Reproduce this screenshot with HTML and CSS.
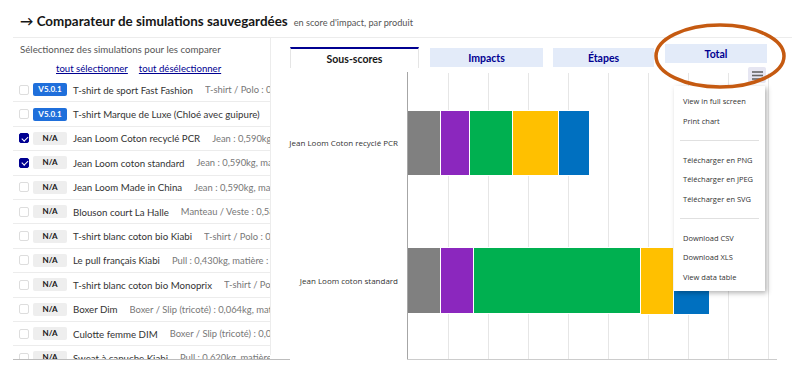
FILE: index.html
```html
<!DOCTYPE html>
<html lang="fr">
<head>
    <meta charset="UTF-8">
    <meta name="viewport" content="width=device-width, initial-scale=1.0">
    <title>Comparateur de simulations</title>
    <link rel="stylesheet" href="styles.css">
</head>
<body>

<div class="page">
    <div class="header">
        <h2 class="title"><span class="arrow">→</span> Comparateur de simulations sauvegardées</h2>
        <span class="subtitle">en score d'impact, par produit</span>
    </div>

    <div class="main">
        <div class="sims">
            <div class="sims-inner">
                <p class="intro">Sélectionnez des simulations pour les comparer</p>
                <div class="links">
                    <a href="#">tout sélectionner</a>
                    <a href="#">tout désélectionner</a>
                </div>
                <ul class="list">
                    <li class="row">
                        <span class="check"></span>
                        <span class="badge version">V5.0.1</span>
                        <span class="name">T-shirt de sport Fast Fashion</span>
                        <span class="detail">T-shirt / Polo : 0,17kg, matière : Polyester</span>
                    </li>
                    <li class="row">
                        <span class="check"></span>
                        <span class="badge version">V5.0.1</span>
                        <span class="name">T-shirt Marque de Luxe (Chloé avec guipure)</span>
                        <span class="detail">T-shirt / Polo : 0,2kg, matière : Coton</span>
                    </li>
                    <li class="row">
                        <span class="check checked"></span>
                        <span class="badge">N/A</span>
                        <span class="name">Jean Loom Coton recyclé PCR</span>
                        <span class="detail">Jean : 0,590kg, ma</span>
                    </li>
                    <li class="row">
                        <span class="check checked"></span>
                        <span class="badge">N/A</span>
                        <span class="name">Jean Loom coton standard</span>
                        <span class="detail">Jean : 0,590kg, matière : Coton</span>
                    </li>
                    <li class="row">
                        <span class="check"></span>
                        <span class="badge">N/A</span>
                        <span class="name">Jean Loom Made in China</span>
                        <span class="detail">Jean : 0,590kg, matière : Coton</span>
                    </li>
                    <li class="row">
                        <span class="check"></span>
                        <span class="badge">N/A</span>
                        <span class="name">Blouson court La Halle</span>
                        <span class="detail">Manteau / Veste : 0,58kg, matière : Polyester</span>
                    </li>
                    <li class="row">
                        <span class="check"></span>
                        <span class="badge">N/A</span>
                        <span class="name">T-shirt blanc coton bio Kiabi</span>
                        <span class="detail">T-shirt / Polo : 0,15kg, matière : Coton bio</span>
                    </li>
                    <li class="row">
                        <span class="check"></span>
                        <span class="badge">N/A</span>
                        <span class="name">Le pull français Kiabi</span>
                        <span class="detail">Pull : 0,430kg, matière : Laine</span>
                    </li>
                    <li class="row">
                        <span class="check"></span>
                        <span class="badge">N/A</span>
                        <span class="name">T-shirt blanc coton bio Monoprix</span>
                        <span class="detail">T-shirt / Polo</span>
                    </li>
                    <li class="row">
                        <span class="check"></span>
                        <span class="badge">N/A</span>
                        <span class="name">Boxer Dim</span>
                        <span class="detail">Boxer / Slip (tricoté) : 0,064kg, matière : Coton</span>
                    </li>
                    <li class="row">
                        <span class="check"></span>
                        <span class="badge">N/A</span>
                        <span class="name">Culotte femme DIM</span>
                        <span class="detail">Boxer / Slip (tricoté) : 0,030kg, matière : Coton</span>
                    </li>
                    <li class="row">
                        <span class="check"></span>
                        <span class="badge">N/A</span>
                        <span class="name">Sweat à capuche Kiabi</span>
                        <span class="detail">Pull : 0,620kg, matière : Coton</span>
                    </li>
                </ul>
            </div>
        </div>

        <div class="chart-panel">
            <div class="tabs">
                <button class="tab active">Sous-scores</button>
                <button class="tab tab-impacts">Impacts</button>
                <button class="tab tab-etapes">Étapes</button>
                <button class="tab tab-total">Total</button>
            </div>

            <div class="chart">
                <svg class="chart-svg" width="522" height="302" viewBox="270 68 522 302">
                    <g stroke="#e6e6e6" stroke-width="1">
                        <line x1="448.5" y1="73" x2="448.5" y2="359"/>
                        <line x1="488.5" y1="73" x2="488.5" y2="359"/>
                        <line x1="528.5" y1="73" x2="528.5" y2="359"/>
                        <line x1="568.5" y1="73" x2="568.5" y2="359"/>
                        <line x1="608.5" y1="73" x2="608.5" y2="359"/>
                        <line x1="648.5" y1="73" x2="648.5" y2="359"/>
                        <line x1="688.5" y1="73" x2="688.5" y2="359"/>
                        <line x1="728.5" y1="73" x2="728.5" y2="359"/>
                        <line x1="768.5" y1="73" x2="768.5" y2="359"/>
                    </g>

                    <!-- Jean Loom Coton recyclé PCR -->
                    <g stroke="#ffffff" stroke-width="1">
                        <rect x="407.5" y="110.5" width="33" height="65" fill="#808080"/>
                        <rect x="440.5" y="110.5" width="29" height="65" fill="#8b27be"/>
                        <rect x="469.5" y="110.5" width="43" height="65" fill="#00b050"/>
                        <rect x="512.5" y="110.5" width="46" height="65" fill="#ffc000"/>
                        <rect x="558.5" y="110.5" width="31" height="65" fill="#0070c0"/>
                    </g>

                    <!-- Jean Loom coton standard -->
                    <g stroke="#ffffff" stroke-width="1">
                        <rect x="407.5" y="247.5" width="33" height="66" fill="#808080"/>
                        <rect x="440.5" y="247.5" width="33" height="66" fill="#8b27be"/>
                        <rect x="473.5" y="247.5" width="167" height="66" fill="#00b050"/>
                        <rect x="640.5" y="247.5" width="33" height="67" fill="#ffc000"/>
                        <rect x="673.5" y="247.5" width="36" height="67" fill="#0070c0"/>
                    </g>

                    <line x1="407.5" y1="72" x2="407.5" y2="360" stroke="#a6a6a6" stroke-width="1"/>
                    <line x1="407" y1="359.5" x2="777" y2="359.5" stroke="#cccccc" stroke-width="1"/>

                    <text class="cat" x="398" y="146" text-anchor="end">Jean Loom Coton recyclé PCR</text>
                    <text class="cat" x="398" y="284" text-anchor="end">Jean Loom coton standard</text>
                </svg>

                <button class="menu-btn" aria-label="Menu du graphique">
                    <svg width="11" height="9" viewBox="0 0 11 9">
                        <g stroke="#666666" stroke-width="1.6">
                            <line x1="0" y1="1" x2="11" y2="1"/>
                            <line x1="0" y1="4.5" x2="11" y2="4.5"/>
                            <line x1="0" y1="8" x2="11" y2="8"/>
                        </g>
                    </svg>
                </button>

                <ul class="menu">
                    <li>View in full screen</li>
                    <li>Print chart</li>
                    <li class="sep"></li>
                    <li>Télécharger en PNG</li>
                    <li>Télécharger en JPEG</li>
                    <li>Télécharger en SVG</li>
                    <li class="sep"></li>
                    <li>Download CSV</li>
                    <li>Download XLS</li>
                    <li>View data table</li>
                </ul>
            </div>
        </div>
    </div>

    <svg class="annotation" width="140" height="72" viewBox="0 0 140 72">
        <ellipse cx="70" cy="36" rx="64" ry="31" fill="none" stroke="#c55a11" stroke-width="3.5"/>
    </svg>
</div>

</body>
</html>
```

FILE: styles.css
```css
body {
    margin: 0;
    font-family: Lato, "Noto Sans", sans-serif;
    color: #161616;
    background: #ffffff;
    overflow: hidden;
}
.page {
    position: relative;
    width: 792px;
    height: 370px;
    padding-left: 13px;
    box-sizing: border-box;
}
.header {
    display: flex;
    align-items: baseline;
    gap: 6px;
    height: 37px;
    padding-left: 7px;
    border-bottom: 1px solid #ececec;
    white-space: nowrap;
}
.title {
    margin: 0;
    padding-top: 13px;
    font-size: 13.4px;
    font-weight: 700;
    color: #161616;
}
.subtitle {
    font-size: 9.2px;
    color: #555555;
}
.main {
    display: flex;
}
.sims {
    width: 257px;
    padding-right: 20px;
    height: 321px;
    border-bottom: 1px solid #bdbdbd;
}
.sims-inner {
    width: 257px;
    height: 317px;
    border-right: 1px solid #ececec;
}
.intro {
    margin: 0;
    padding: 5px 0 0 7px;
    font-size: 9.7px;
    line-height: 12px;
    color: #555555;
}
.links {
    display: flex;
    gap: 11px;
    height: 23px;
    padding: 8px 0 0 43px;
    box-sizing: border-box;
    line-height: 12px;
}
.links a {
    font-size: 9.6px;
    color: #000091;
}
.list {
    list-style: none;
    margin: 0;
    padding: 0;
    height: 281px;
    overflow: hidden;
}
.row {
    display: flex;
    align-items: center;
    height: 23.4px;
    padding-left: 6px;
    border-bottom: 1px solid #ececec;
    white-space: nowrap;
    overflow: hidden;
}
.check {
    flex: none;
    width: 10px;
    height: 10px;
    border: 1px solid #dddddd;
    border-radius: 2px;
    box-sizing: border-box;
    margin-right: 4px;
    position: relative;
}
.check.checked {
    background: #000091;
    border-color: #000091;
}
.check.checked::after {
    content: "";
    position: absolute;
    left: 2.5px;
    top: 0.5px;
    width: 2.5px;
    height: 5px;
    border: solid #ffffff;
    border-width: 0 1.3px 1.3px 0;
    transform: rotate(45deg);
}
.badge {
    flex: none;
    width: 34px;
    height: 13px;
    line-height: 13px;
    border-radius: 2px;
    background: #eeeeee;
    color: #161616;
    font-size: 8px;
    font-weight: 700;
    text-align: center;
    margin-right: 6px;
}
.badge.version {
    background: #1f6fdb;
    color: #ffffff;
}
.name {
    flex: none;
    font-size: 9.7px;
    color: #333333;
    margin-right: 12px;
}
.detail {
    min-width: 0;
    overflow: hidden;
    font-size: 9.4px;
    color: #777777;
}
.chart-panel {
    flex: 1;
    margin-left: -20px;
}
.tabs {
    display: flex;
    align-items: flex-start;
    height: 30px;
    padding: 9px 0 0 20px;
    box-sizing: border-box;
}
.tab {
    height: 19px;
    margin-top: 1px;
    border: none;
    background: #e3ebf9;
    color: #000091;
    font-family: Lato, "Noto Sans", sans-serif;
    font-size: 10.5px;
    font-weight: 700;
    padding: 0;
}
.tab.active {
    width: 129px;
    height: 21px;
    margin-top: 0;
    background: #ffffff;
    color: #161616;
    border-top: 2px solid #000091;
    border-left: 1px solid #e5e5e5;
    border-right: 1px solid #e5e5e5;
}
.tab-impacts {
    width: 113px;
    margin-left: 11px;
}
.tab-etapes {
    width: 101px;
    margin-left: 10px;
}
.tab-total {
    width: 102px;
    margin-left: 11px;
    margin-top: -3px;
}
.chart {
    position: relative;
    height: 302px;
}
.chart-svg {
    display: block;
}
.cat {
    font-family: "Open Sans", "Noto Sans", sans-serif;
    font-size: 8px;
    fill: #333333;
}
.menu-btn {
    position: absolute;
    left: 478px;
    top: -1px;
    width: 18px;
    height: 16px;
    padding: 0;
    border: none;
    border-radius: 2px;
    background: #e6e6f2;
    display: flex;
    align-items: center;
    justify-content: center;
}
.menu {
    position: absolute;
    left: 404px;
    top: 18px;
    width: 91px;
    margin: 0;
    padding: 6px 0 4px;
    list-style: none;
    background: #ffffff;
    box-shadow: 2px 2px 5px rgba(0, 0, 0, 0.3);
    box-sizing: border-box;
}
.menu li {
    height: 19.5px;
    line-height: 19.5px;
    padding-left: 9px;
    font-family: "Open Sans", "Noto Sans", sans-serif;
    font-size: 7.5px;
    color: #333333;
    white-space: nowrap;
}
.menu li.sep {
    height: 1px;
    margin: 9.25px 6px;
    background: #e0e0e0;
}
.annotation {
    position: absolute;
    left: 650px;
    top: 20px;
}
```
